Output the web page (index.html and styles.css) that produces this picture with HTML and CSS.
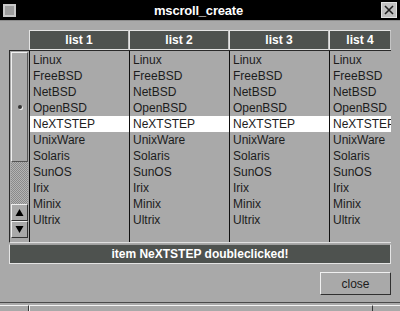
FILE: index.html
```html
<!DOCTYPE html>
<html lang="en">
<head>
    <title>mscroll_create</title>
    <link rel="stylesheet" href="styles.css">
</head>
<body>
<div class="window">
    <div class="titlebar">
        <span class="menu-btn"><span></span></span>
        <span class="title">mscroll_create</span>
        <span class="close-btn">
            <svg width="14" height="14" viewBox="0 0 14 14">
                <path d="M3 3 L11 11 M11 3 L3 11" stroke="#202020" stroke-width="1.6"/>
            </svg>
        </span>
    </div>

    <div class="body">
        <div class="heads">
            <div class="spacer"></div>
            <div class="head">list 1</div>
            <div class="head">list 2</div>
            <div class="head">list 3</div>
            <div class="head last">list 4</div>
        </div>

        <div class="panel">
            <div class="scroller">
                <div class="thumb"><span class="knob"></span></div>
                <div class="trough"></div>
                <div class="arrow"><svg width="9" height="9" viewBox="0 0 9 9"><path d="M4.5 1 L8.5 8 L0.5 8 Z" fill="#000"/></svg></div>
                <div class="arrow"><svg width="9" height="9" viewBox="0 0 9 9"><path d="M0.5 1 L8.5 1 L4.5 8 Z" fill="#000"/></svg></div>
            </div>
            <ul class="list"></ul>
            <ul class="list"></ul>
            <ul class="list"></ul>
            <ul class="list last"></ul>
        </div>

        <div class="status">item NeXTSTEP doubleclicked!</div>

        <div class="buttons">
            <button class="btn">close</button>
        </div>
    </div>

    <div class="below">
        <div class="seg a"></div>
        <div class="seg b"></div>
        <div class="seg c"></div>
    </div>
</div>

<script>
    var items = ['Linux', 'FreeBSD', 'NetBSD', 'OpenBSD', 'NeXTSTEP', 'UnixWare',
                 'Solaris', 'SunOS', 'Irix', 'Minix', 'Ultrix'];

    document.querySelectorAll('.list').forEach(function (ul) {
        items.forEach(function (name) {
            var li = document.createElement('li');
            li.textContent = name;
            if (name === 'NeXTSTEP') li.className = 'sel';
            ul.appendChild(li);
        });
    });
</script>
</body>
</html>
```

FILE: styles.css
```css
body {
    margin: 0;
    background: #a9a9a9;
    font-family: "Liberation Sans", Arial, sans-serif;
    overflow: hidden;
}

.window {
    width: 400px;
    height: 311px;
    display: flex;
    flex-direction: column;
}

.titlebar {
    height: 20px;
    background: #000;
    display: flex;
    align-items: center;
    justify-content: space-between;
    padding: 0 3px;
    border-bottom: 1px solid #8c8c8c;
}

.menu-btn {
    width: 9px;
    height: 9px;
    border: 2px solid #c8c8c8;
    background: #9c9c9c;
    display: block;
}

.title {
    color: #fff;
    font-weight: bold;
    font-size: 13px;
    letter-spacing: -0.2px;
}

.close-btn {
    width: 14px;
    height: 14px;
    background: #c0c0c0;
    display: block;
    border: 1px solid #e0e0e0;
}

.close-btn svg {
    display: block;
}

.body {
    padding: 9px 9px 0 9px;
    display: flex;
    flex-direction: column;
}

.heads {
    display: flex;
    height: 20px;
}

.spacer {
    width: 20px;
}

.head {
    width: 100px;
    box-sizing: border-box;
    background: #4e524f;
    border: 1px solid #e4e4e4;
    border-right-color: #c4c4c4;
    color: #fff;
    font-weight: bold;
    font-size: 12px;
    text-align: center;
    line-height: 18px;
}

.head.last {
    flex: 1;
    width: auto;
}

.panel {
    display: flex;
    height: 191px;
    border-top: 1px solid #2a2a2a;
    border-left: 1px solid #2a2a2a;
    border-bottom: 1px solid #e0e0e0;
    overflow: hidden;
}

.scroller {
    width: 19px;
    display: flex;
    flex-direction: column;
    padding: 1px 1px 0 1px;
    box-sizing: border-box;
}

.thumb {
    height: 110px;
    box-sizing: border-box;
    border: 1px solid #f0f0f0;
    border-right-color: #555;
    border-bottom-color: #555;
    display: flex;
    align-items: center;
    justify-content: center;
}

.knob {
    width: 4px;
    height: 4px;
    border-radius: 50%;
    background: #333;
    box-shadow: 1px 1px 0 #eee;
}

.trough {
    height: 42px;
    background: repeating-conic-gradient(#8a8a8a 0 25%, #b4b4b4 0 50%) 0 0 / 2px 2px;
}

.arrow {
    height: 17px;
    box-sizing: border-box;
    border: 1px solid #f0f0f0;
    border-right-color: #333;
    border-bottom-color: #333;
    display: flex;
    align-items: center;
    justify-content: center;
}

.list {
    list-style: none;
    margin: 0;
    padding: 1px 0 0 0;
    width: 100px;
    flex-shrink: 0;
    box-sizing: border-box;
    border-left: 1px solid #111;
}

.list.last {
    width: auto;
    flex: 1;
    overflow: hidden;
}

.list li {
    height: 16px;
    line-height: 16px;
    font-size: 12px;
    color: #1c1c1c;
    padding-left: 3px;
    white-space: nowrap;
}

.list li.sel {
    background: #fff;
}

.status {
    margin-top: 1px;
    height: 20px;
    box-sizing: border-box;
    background: #4e524f;
    border: 1px solid #a0a0a0;
    border-left-color: #e4e4e4;
    border-bottom-color: #e4e4e4;
    border-right-color: #e4e4e4;
    color: #fff;
    font-weight: bold;
    font-size: 12px;
    line-height: 18px;
    text-align: center;
}

.buttons {
    display: flex;
    justify-content: flex-end;
    margin-top: 8px;
}

.btn {
    width: 71px;
    height: 23px;
    box-sizing: border-box;
    background: #a9a9a9;
    border: 1px solid #f0f0f0;
    border-right-color: #303030;
    border-bottom-color: #303030;
    font-family: "Liberation Sans", Arial, sans-serif;
    font-size: 12px;
    color: #1c1c1c;
    padding: 0;
}

.below {
    margin-top: auto;
    height: 9px;
    border-top: 1px solid #4a4a4a;
    display: flex;
    padding-top: 2px;
    box-sizing: border-box;
}

.seg {
    border-top: 1px solid #f4f4f4;
}

.seg.a {
    width: 28px;
    border-right: 1px solid #333;
}

.seg.b {
    flex: 1;
    border-left: 1px solid #f4f4f4;
    border-right: 1px solid #333;
}

.seg.c {
    width: 27px;
}
```
